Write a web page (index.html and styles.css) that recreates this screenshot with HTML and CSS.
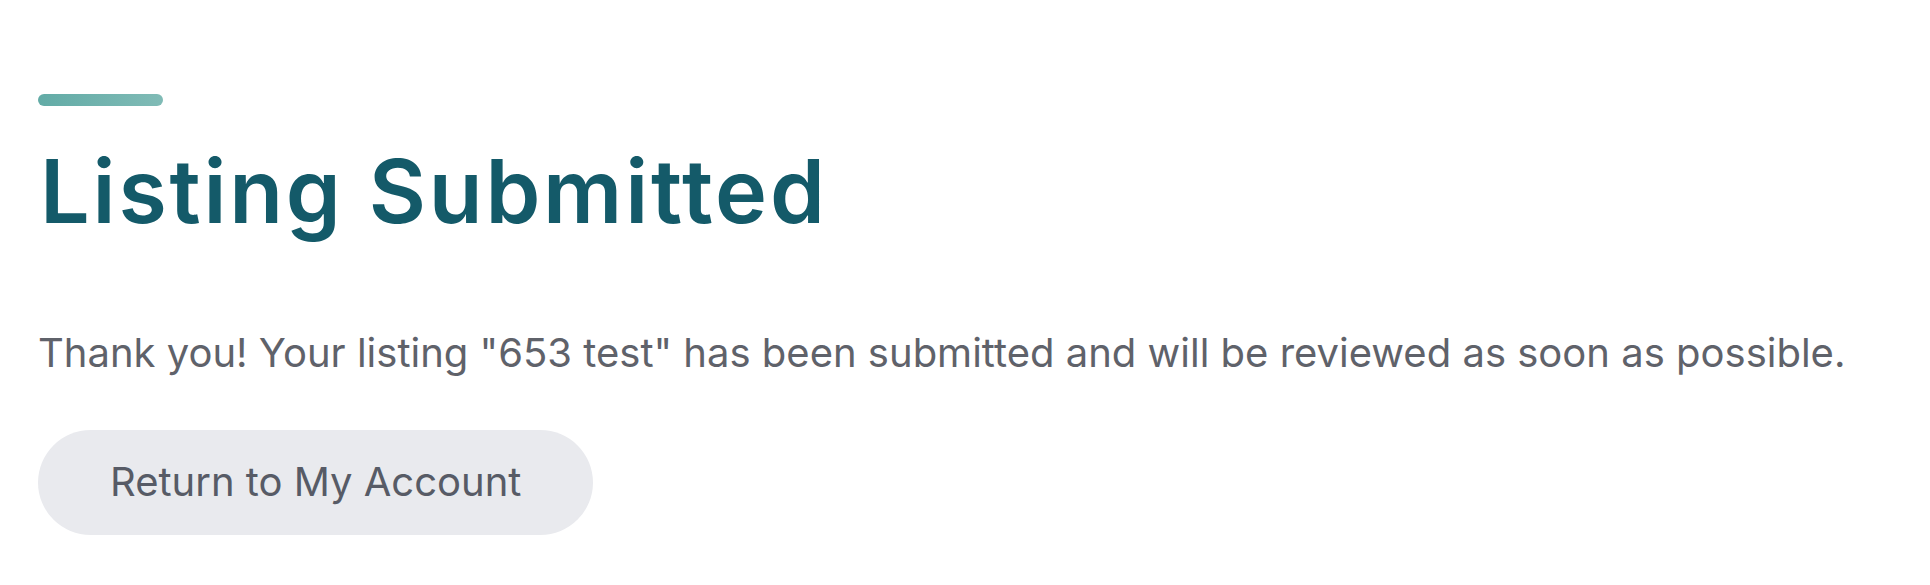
FILE: index.html
```html
<!doctype html>
<html lang="en">
  <head>
    <meta charset="UTF-8" />
    <meta name="viewport" content="width=device-width, initial-scale=1.0" />
    <link rel="stylesheet" href="styles.css">
    <title>Listing Submitted</title>
  </head>
  <body>
    <main class="confirmation">
      <!-- Short accent line above the title -->
      <span class="accent"></span>
      <h1 class="title">Listing Submitted</h1>
      <p class="message">
        Thank you! Your listing "653 test" has been submitted and will be reviewed as soon as possible.
      </p>
      <div class="actions">
        <a class="button" href="#">Return to My Account</a>
      </div>
    </main>
  </body>
</html>
```

FILE: styles.css
```css
html,
body {
  margin: 0;
  background: #ffffff;
}

.confirmation {
  display: flex;
  flex-direction: column;
  align-items: flex-start;
  padding: 94px 38px 0;
}

.accent {
  display: block;
  width: 125px;
  height: 12px;
  border-radius: 6px;
  background: linear-gradient(90deg, #62aba6, #80bbb6);
}

.title {
  margin: 41px 0 0 2px;
  font-family: Inter, "Open Sans", sans-serif;
  font-weight: 600;
  font-size: 88px;
  line-height: 1;
  letter-spacing: 2.8px;
  color: #145a69;
  font-variant-ligatures: none;
}

.message {
  margin: 94px 0 0;
  font-family: Inter, "Noto Sans", sans-serif;
  font-size: 40px;
  line-height: 48px;
  color: #5f626a;
}

.actions {
  margin-top: 53px;
}

.button {
  display: inline-block;
  padding: 28px 72px 29px;
  border-radius: 999px;
  background: #e9eaee;
  font-family: Inter, "Noto Sans", sans-serif;
  font-size: 40px;
  line-height: 48px;
  color: #575b66;
  text-decoration: none;
}
```
